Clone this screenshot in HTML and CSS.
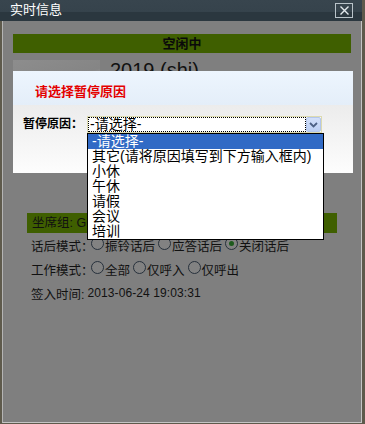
FILE: index.html
```html
<!DOCTYPE html>
<html>
<head>
<meta charset="utf-8">
<link rel="stylesheet" href="styles.css">
</head>
<body>
<div class="window">
  <div class="titlebar">
    <span class="title">实时信息</span>
    <span class="close"><svg width="11" height="11" viewBox="0 0 11 11"><path d="M1.5 1.5 L9.5 9.5 M9.5 1.5 L1.5 9.5" stroke="#e2e8ec" stroke-width="1.4" fill="none"/></svg></span>
  </div>
  <div class="panel">
    <div class="status">空闲中</div>
    <div class="profile">
      <div class="photo"></div>
      <div class="name">2019 (shi)</div>
    </div>
    <div class="group">坐席组: Gr</div>
    <div class="row">
      <span class="label">话后模式：</span>
      <span class="radio"></span><span class="opt">振铃话后</span>
      <span class="radio"></span><span class="opt">应答话后</span>
      <span class="radio checked"></span><span class="opt">关闭话后</span>
    </div>
    <div class="row">
      <span class="label">工作模式：</span>
      <span class="radio"></span><span class="opt">全部</span>
      <span class="radio"></span><span class="opt">仅呼入</span>
      <span class="radio"></span><span class="opt">仅呼出</span>
    </div>
    <div class="row">
      <span class="time-label">签入时间:</span><span class="latin">2013-06-24 19:03:31</span>
    </div>

    <div class="dialog">
      <div class="dialog-head">请选择暂停原因</div>
      <div class="dialog-body">
        <span class="field-label">暂停原因：</span>
        <div class="select">
          <div class="select-box">
            <span class="select-value">-请选择-</span>
            <span class="select-arrow"><svg width="9" height="6" viewBox="0 0 9 6"><path d="M1 1 L4.5 4.5 L8 1" stroke="#4d6185" stroke-width="1.8" fill="none"/></svg></span>
          </div>
          <ul class="options">
            <li class="selected">-请选择-</li>
            <li>其它(请将原因填写到下方输入框内)</li>
            <li>小休</li>
            <li>午休</li>
            <li>请假</li>
            <li>会议</li>
            <li>培训</li>
          </ul>
        </div>
      </div>
    </div>
  </div>
</div>
</body>
</html>
```

FILE: styles.css
```css
html, body {
  margin: 0;
  padding: 0;
}
body {
  width: 365px;
  height: 424px;
  overflow: hidden;
  background: #5e5a4c;
  font-family: "Liberation Sans", "Noto Sans CJK SC", sans-serif;
  font-size: 12.5px;
  color: #111;
}
.window {
  width: 362px;
}
.titlebar {
  height: 21px;
  display: flex;
  align-items: center;
  justify-content: space-between;
  padding: 0 9px 0 10px;
  box-sizing: border-box;
  background: linear-gradient(#38454e 0, #36434c 55%, #2b373f 56%, #2b373f 100%);
}
.title {
  color: #fff;
  font-size: 13px;
  line-height: 16px;
  margin-top: -2px;
}
.close {
  width: 18px;
  height: 15px;
  box-sizing: border-box;
  border: 1px solid #b9c3c9;
  display: flex;
  align-items: center;
  justify-content: center;
  margin-top: -1px;
}
.panel {
  position: relative;
  margin-left: 2px;
  height: 402px;
  box-sizing: border-box;
  border-left: 1px solid #b4b4b4;
  border-right: 1px solid #c4c4c4;
  border-bottom: 1px solid #c4c4c4;
  background: #7f7f7f;
  padding-top: 13px;
}
.status {
  margin: 0 10px;
  height: 19px;
  line-height: 19px;
  background: #3f5f00;
  text-align: center;
  font-weight: bold;
  font-size: 13px;
  color: #0a0a0a;
}
.profile {
  margin-top: 7px;
  height: 153px;
  display: flex;
  gap: 10px;
  padding-left: 10px;
}
.photo {
  width: 87px;
  height: 100px;
  background: linear-gradient(160deg, #8d8d8d 0%, #858585 30%, #909090 34%, #828282 40%, #7c7c7c 100%);
}
.name {
  font-size: 20px;
  line-height: 20px;
  color: #111;
}
.group {
  margin: 0 24px;
  height: 20px;
  line-height: 20px;
  background: #3f5f00;
  padding-left: 5px;
  color: #111;
}
.row {
  height: 24px;
  display: flex;
  align-items: center;
  padding-left: 28px;
  white-space: nowrap;
}
.label {
  width: 60px;
  flex: none;
}
.time-label {
  flex: none;
}
.radio {
  width: 11px;
  height: 11px;
  border: 1px solid #27313c;
  border-radius: 50%;
  background: #828282;
  margin-right: 1px;
  position: relative;
  top: -2px;
  flex: none;
}
.radio.checked::after {
  content: "";
  position: absolute;
  left: 3px;
  top: 3px;
  width: 5px;
  height: 5px;
  border-radius: 50%;
  background: #1d5a1d;
}
.opt {
  margin-right: 3px;
  flex: none;
}
.latin {
  font-size: 12px;
  letter-spacing: 0.1px;
  margin-left: 3px;
}
.dialog {
  position: absolute;
  left: 10px;
  top: 50px;
  width: 340px;
  height: 102px;
  background: #fbfbfb;
}
.dialog-head {
  height: 34px;
  box-sizing: border-box;
  padding: 13px 0 0 22px;
  line-height: 16px;
  font-size: 13px;
  font-weight: bold;
  color: #e40000;
  background: linear-gradient(#edf5fe, #e4eef9);
}
.dialog-body {
  height: 68px;
  box-sizing: border-box;
  padding: 11px 0 0 10px;
  display: flex;
  align-items: flex-start;
  background: linear-gradient(#ececec, #fdfdfd);
}
.field-label {
  width: 64px;
  flex: none;
  font-size: 12px;
  font-weight: bold;
  line-height: 17px;
  color: #000;
  white-space: nowrap;
}
.select {
  position: relative;
  width: 235px;
  height: 17px;
}
.select-box {
  display: flex;
  height: 17px;
  box-sizing: border-box;
  border: 1px solid #dcdab0;
  background: #fff;
}
.select-value {
  width: 216px;
  height: 13px;
  margin: 1px 0 0 1px;
  outline: 1px dotted #000;
  font-size: 14px;
  line-height: 13px;
  padding-left: 1px;
  color: #000;
  box-sizing: border-box;
}
.select-arrow {
  width: 15px;
  height: 15px;
  margin-left: 1px;
  box-sizing: border-box;
  border: 1px solid #b3c6ec;
  border-radius: 2px;
  background: linear-gradient(#d3e0fa, #bccff3);
  display: flex;
  align-items: center;
  justify-content: center;
}
.options {
  position: absolute;
  left: 0;
  top: 17px;
  width: 237px;
  box-sizing: border-box;
  margin: 0;
  padding: 0;
  list-style: none;
  border: 1px solid #000;
  background: #fff;
}
.options li {
  height: 15px;
  line-height: 15px;
  font-size: 14px;
  padding-left: 4px;
  color: #000;
  white-space: nowrap;
}
.options li.selected {
  background: #316ac5;
  color: #fff;
}
```
